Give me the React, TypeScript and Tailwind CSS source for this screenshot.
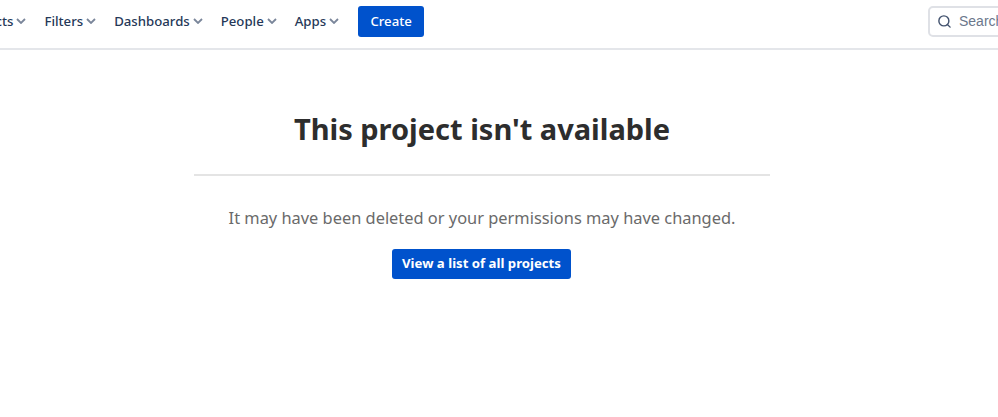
import { Search } from 'lucide-react';

const navItems = ['Projects', 'Filters', 'Dashboards', 'People', 'Apps'];

function Caret() {
  return (
    <svg viewBox="0 0 10 6" className="ml-[3px] h-[6px] w-[10px] shrink-0" fill="none" stroke="#7a869a" strokeWidth="1.8">
      <path d="M1 1l4 4 4-4" />
    </svg>
  );
}

export default function App() {
  return (
    <div className="h-[417px] w-[998px] overflow-hidden bg-white font-['Noto_Sans',sans-serif]">
      {/* Top bar */}
      <header className="flex h-[50px] items-center overflow-hidden border-b-2 border-[#e4e6ea] pb-[6px]">
        <nav className="-ml-[37px] flex shrink-0 items-center gap-[18px]">
          {navItems.map((item) => (
            <a key={item} className="flex items-center pt-px text-[13.2px] font-medium text-[#253858]">
              {item}
              <Caret />
            </a>
          ))}
          <button className="ml-px h-[31px] w-[66px] rounded-[3px] bg-[#0052cc] pt-px text-[13.2px] font-medium text-white">
            Create
          </button>
        </nav>
        <div className="ml-auto -mr-[60px] flex h-[31px] w-[130px] shrink-0 items-center rounded-[5px] border-2 border-[#dfe1e6] pl-[7px]">
          <Search className="h-[15px] w-[15px] text-[#42526e]" strokeWidth={2.25} />
          <span className="ml-[7px] font-['Liberation_Sans',sans-serif] text-[14px] text-[#6b778c]">Search</span>
        </div>
      </header>

      {/* Message */}
      <div className="w-[964px]">
        <main className="mx-auto flex w-[576px] flex-col items-center pt-[57px]">
          <h1 className="text-[29px] leading-[44px] font-bold text-[#2d2d2d]">This project isn't available</h1>
          <div className="mt-[23px] h-[2px] w-full bg-[#e4e4e4]" />
          <p className="mt-[29px] text-[16.4px] leading-[26px] text-[#6a6a6a]">
            It may have been deleted or your permissions may have changed.
          </p>
          <button className="mt-[18px] mr-px h-[30px] w-[179px] rounded-[3px] bg-[#0052cc] text-[13.2px] font-bold text-white">
            View a list of all projects
          </button>
        </main>
      </div>
    </div>
  );
}
